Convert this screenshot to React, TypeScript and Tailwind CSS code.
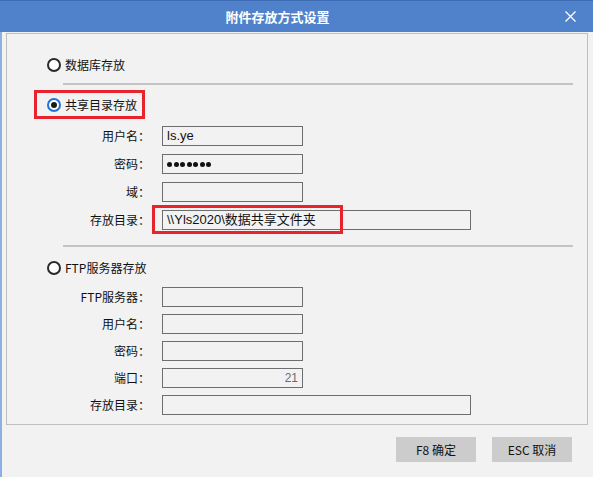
import React from 'react';

const cjk = { fontFamily: '"Noto Sans CJK SC", "Noto Sans", sans-serif' };
const latin = { fontFamily: '"Liberation Sans", "Noto Sans CJK SC", sans-serif' };

const Radio: React.FC<{ checked?: boolean }> = ({ checked }) =>
  checked ? (
    <span className="w-[14px] h-[14px] rounded-full border-2 border-[#1f72d8] bg-white flex items-center justify-center shrink-0">
      <span className="w-[6px] h-[6px] rounded-full bg-[#1a1a1a]" />
    </span>
  ) : (
    <span className="w-[14px] h-[14px] rounded-full border-2 border-[#2a2a2a] bg-white shrink-0" />
  );

const Field: React.FC<{ label: string; wide?: boolean; children?: React.ReactNode; right?: boolean }> = ({
  label,
  wide,
  children,
  right,
}) => (
  <div className="flex items-center h-[20px]">
    <div className="w-[143px] text-right text-[12px] text-[#111] leading-none whitespace-nowrap" style={cjk}>
      {label}
    </div>
    <div
      className={`ml-[12px] h-[20px] border border-[#6e6e6e] bg-[#f2f2f2] flex items-center px-[4px] ${
        wide ? 'w-[309px]' : 'w-[141px]'
      } ${right ? 'justify-end' : ''}`}
    >
      {children}
    </div>
  </div>
);

export default function App() {
  return (
    <div className="w-[593px] h-[477px] bg-[#f2f2f2] flex flex-col overflow-hidden select-none">
      {/* title bar */}
      <div className="h-[32px] bg-[#5082cc] border-t border-[#3f6db5] flex items-center shrink-0">
        <div className="flex-1 text-center text-white font-bold text-[13px] pl-[8px]" style={cjk}>
          附件存放方式设置
        </div>
        <div className="w-[46px] flex items-center justify-center">
          <svg width="11" height="11" viewBox="0 0 11 11">
            <path d="M0.5 0.5 L10.5 10.5 M10.5 0.5 L0.5 10.5" stroke="#fff" strokeWidth="1.3" />
          </svg>
        </div>
      </div>

      <div className="flex-1 border-l-2 border-[#8db0e2] flex flex-col">
        {/* group panel */}
        <div className="ml-[4px] mr-[5px] mt-[1px] h-[392px] border border-[#bfbfbf] flex flex-col">
          <div className="mt-[23px] ml-[40px] h-[16px] flex items-center gap-[4px]">
            <Radio />
            <span className="text-[12px] text-[#111]" style={cjk}>数据库存放</span>
          </div>
          <div className="mt-[10px] ml-[56px] mr-[14px] h-[2px] bg-[#c4c4c4]" />

          <div className="mt-[5px] ml-[27px] w-[111px] h-[29px] border-[3px] border-[#e8232b] flex items-center pl-[10px] gap-[4px]">
            <Radio checked />
            <span className="text-[12px] text-[#111]" style={cjk}>共享目录存放</span>
          </div>

          <div className="mt-[7px] flex flex-col gap-[8px]">
            <Field label="用户名：">
              <span className="text-[13px] text-[#111]" style={latin}>ls.ye</span>
            </Field>
            <Field label="密码：">
              <span className="flex gap-[1.5px]">
                {Array.from({ length: 7 }).map((_, i) => (
                  <span key={i} className="w-[5px] h-[5px] rounded-full bg-[#111]" />
                ))}
              </span>
            </Field>
            <Field label="域：" />
            <div className="relative">
              <Field label="存放目录：" wide>
                <span className="text-[13px] text-[#111] whitespace-nowrap" style={latin}>
                  \\Yls2020\数据共享文件夹
                </span>
              </Field>
              <div className="absolute left-[145px] top-[-5px] w-[191px] h-[29px] border-[3px] border-[#e8232b] pointer-events-none" />
            </div>
          </div>

          <div className="mt-[15px] ml-[56px] mr-[14px] h-[2px] bg-[#c4c4c4]" />

          <div className="mt-[13px] ml-[40px] h-[16px] flex items-center gap-[4px]">
            <Radio />
            <span className="text-[12px] text-[#111]" style={cjk}>FTP服务器存放</span>
          </div>

          <div className="mt-[11px] flex flex-col gap-[7px]">
            <Field label="FTP服务器：" />
            <Field label="用户名：" />
            <Field label="密码：" />
            <Field label="端口：" right>
              <span className="text-[12px] text-[#6d6d6d]" style={latin}>21</span>
            </Field>
            <Field label="存放目录：" wide />
          </div>
        </div>

        {/* buttons */}
        <div className="mt-[12px] flex justify-end gap-[16px] pr-[21px]">
          <button className="w-[80px] h-[25px] bg-[#cccccc] text-[12px] text-[#111]" style={cjk}>
            F8 确定
          </button>
          <button className="w-[80px] h-[25px] bg-[#cccccc] text-[12px] text-[#111]" style={cjk}>
            ESC 取消
          </button>
        </div>
      </div>
    </div>
  );
}
